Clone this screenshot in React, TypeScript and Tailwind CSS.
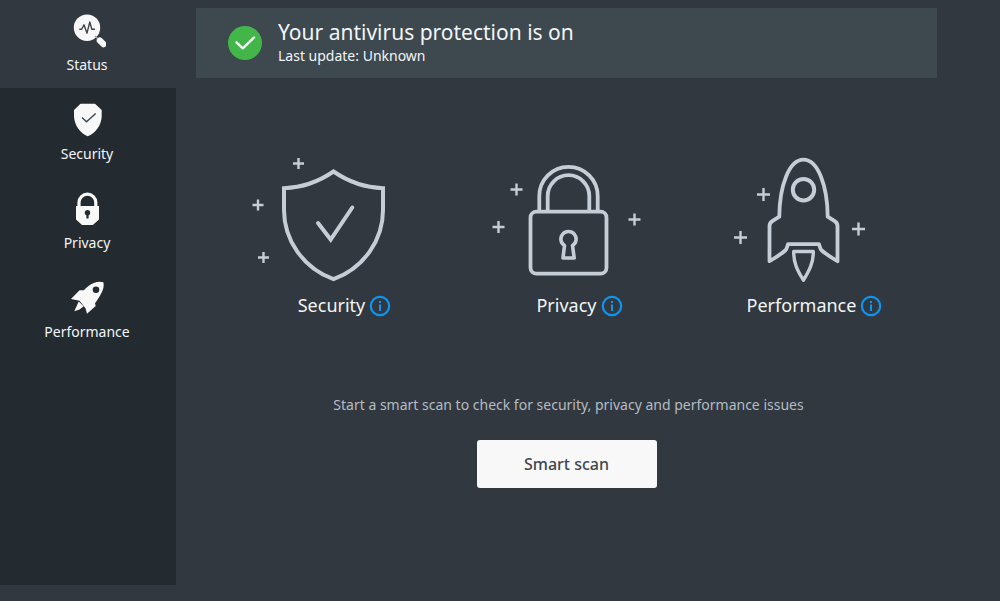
import type { ReactNode } from 'react';

function StatusIcon() {
  return (
    <svg viewBox="0 0 36 36" className="size-9" fill="none" aria-hidden="true">
      <circle cx="17" cy="15.7" r="13.2" fill="#f8f8f8" />
      <path d="M9.3 17.3h2.4L14 12.8l3 8.4L19.8 10l2 7.3H25" stroke="#3d4850" strokeWidth="1.4" strokeLinejoin="round" />
      <path d="M25 24l4 4" stroke="#9aa3aa" strokeWidth="1.5" />
      <path d="M29.8 28.6l3.800 3.600" stroke="#f8f8f8" strokeWidth="6.200" strokeLinecap="round" />
    </svg>
  );
}

function ShieldIcon() {
  return (
    <svg viewBox="0 0 36 36" className="size-9" fill="none" aria-hidden="true">
      <path d="M10.5 2.7h14.500L31.700 9v6c0 9-6.500 17.500-14 20.200C10.500 32.500 4 24 4 15V9z" fill="#f8f8f8" />
      <path d="M12 16.500l4.500 4.300 9.200-8.200" stroke="#3d4850" strokeWidth="1.4" />
    </svg>
  );
}

function LockIcon() {
  return (
    <svg viewBox="0 0 36 36" className="size-9" fill="none" aria-hidden="true">
      <path d="M9 17v-4.500a8.400 8.400 0 0 1 16.800 0V17" stroke="#f8f8f8" strokeWidth="3.200" />
      <path d="M6 16h23v13.500L22.800 35H12l-6-5.500z" fill="#f8f8f8" />
      <circle cx="17.500" cy="22.800" r="2.700" fill="#232b31" />
      <path d="M17.500 23v5.500" stroke="#232b31" strokeWidth="2.200" />
    </svg>
  );
}

function RocketIcon() {
  return (
    <svg viewBox="0 0 36 36" className="size-9" aria-hidden="true">
      <path
        d="M33.400 3.300c.8 3.400 0 7-1.700 10.200-1.800 3.800-4.200 7.500-6.700 10.800l.7 2.700-8.700 7.700-1.500-5.400-6-7.600L1 20l8.500-8.700h4.300c3-3.200 6.300-5.800 10-7.300 3.200-1.300 6.500-1.700 9.600-.7z"
        fill="#f8f8f8"
      />
      <circle cx="26" cy="10.700" r="3.300" fill="#232b31" />
      <path d="M8.700 22.500l5 4.700-4.200 3.300-5.200 1.700z" fill="#f8f8f8" />
    </svg>
  );
}

function Plus({ x, y, r = 6 }: { x: number; y: number; r?: number }) {
  return <path d={`M${x - r} ${y}h${r * 2}M${x} ${y - r}v${r * 2}`} strokeWidth="2.400" strokeLinecap="butt" />;
}

function Art({ children }: { children: ReactNode }) {
  return (
    <svg
      viewBox="-100 0 200 140"
      className="h-[140px] w-[200px]"
      fill="none"
      stroke="#c5ced7"
      strokeWidth="4"
      strokeLinecap="round"
      strokeLinejoin="round"
      aria-hidden="true"
    >
      {children}
    </svg>
  );
}

function ShieldArt() {
  return (
    <Art>
      <path
        d="M.5 21.500C-14 31.500-31 37.500-49 38.200V60C-49 90-30 118 .5 129.200 31 118 50 90 50 60V38.200C32 37.500 15 31.500.5 21.500z"
        strokeLinejoin="miter"
      />
      <path d="M-15 73L-2.300 89.500 19.300 57.500" strokeLinejoin="miter" />
      <Plus x={-34.5} y={13.5} r={5.5} />
      <Plus x={-75} y={55} r={5.5} />
      <Plus x={-69.5} y={107.5} r={5.5} />
    </Art>
  );
}

function LockArt() {
  return (
    <Art>
      <rect x="-37.500" y="61.700" width="76" height="62" rx="6" strokeWidth="3.800" />
      <path d="M-28.700 61V46a29.200 29.200 0 0 1 58.400 0v15M-20.300 61V46a20.800 20.800 0 0 1 41.600 0v15" strokeWidth="3.800" />
      <path d="M-3.500 95.500a7.600 7.600 0 1 1 8 0l1.700 12.500H-5z" strokeWidth="3.600" />
      <Plus x={-51.500} y={39.500} />
      <Plus x={-69.500} y={77} />
      <Plus x={66.500} y={69.500} />
    </Art>
  );
}

function RocketArt() {
  return (
    <Art>
      <path
        d="M.5 9.700C-14 9.700-23.500 36-23.700 66.700l-7 4.500c-2 1.300-2.800 2.500-2.800 5v35c7-4 12-7.500 16-11 1.500-1.500 1.700-4 2.500-6h31c.8 2 1 4.500 2.500 6 4 3.500 9 7 16 11v-35c0-2.500-.8-3.700-2.800-5l-7-4.500C24.500 36 15 9.700.5 9.700z"
        strokeWidth="3.800"
      />
      <circle cx=".5" cy="39.700" r="10.700" />
      <path d="M-9.300 101.500h19.600C10.500 113 6 121 .5 130.200-5.500 121-9.500 113-9.300 101.500z" strokeWidth="3.400" />
      <Plus x={-39.500} y={44.500} r={6.5} />
      <Plus x={-62.500} y={87.500} r={6.5} />
      <Plus x={55.500} y={79} r={6.5} />
    </Art>
  );
}

function InfoIcon() {
  return (
    <svg viewBox="0 0 22 22" className="size-[22px]" fill="none" stroke="#0d96f0" aria-hidden="true">
      <circle cx="11" cy="11" r="9.200" strokeWidth="2.200" />
      <path d="M11 9.500v6.500M11 6v2" strokeWidth="2" />
    </svg>
  );
}

const navItems = [
  { label: 'Status', icon: <StatusIcon />, active: true },
  { label: 'Security', icon: <ShieldIcon />, active: false },
  { label: 'Privacy', icon: <LockIcon />, active: false },
  { label: 'Performance', icon: <RocketIcon />, active: false },
];

const areas = [
  { label: 'Security', art: <ShieldArt /> },
  { label: 'Privacy', art: <LockArt /> },
  { label: 'Performance', art: <RocketArt /> },
];

export default function App() {
  return (
    <div className="flex min-h-screen bg-[#31383f] font-['Noto_Sans','Open_Sans',sans-serif] text-[#f2f5f7]">
      <nav className="mb-4 w-44 shrink-0 bg-[#232b31]" aria-label="Main">
        <ul>
          {navItems.map((item) => (
            <li key={item.label}>
              <a
                href={`#${item.label.toLowerCase()}`}
                aria-current={item.active ? 'page' : undefined}
                className={
                  item.active
                    ? 'flex h-[88px] flex-col items-center gap-[7px] bg-[#31383f] pt-3 text-sm'
                    : 'flex h-[89px] flex-col items-center gap-[7px] pt-[13px] text-sm'
                }
              >
                {item.icon}
                <span className="pr-0.5">{item.label}</span>
              </a>
            </li>
          ))}
        </ul>
      </nav>

      <main className="min-w-0 flex-1 pt-2 pr-[63px] pl-5">
        <header className="flex h-[70px] items-center gap-4 bg-[#3d484f] pl-8">
          <svg viewBox="0 0 34 34" className="size-[34px] shrink-0" aria-hidden="true">
            <circle cx="17" cy="17" r="17" fill="#43b649" />
            <path d="M8.500 16.300l6.300 6L26 11.500" fill="none" stroke="#fff" strokeWidth="2.400" strokeLinecap="round" strokeLinejoin="round" />
          </svg>
          <div className="pb-0.5">
            <h1 className="text-[21px] leading-7">Your antivirus protection is on</h1>
            <p className="text-sm leading-5">Last update: Unknown</p>
          </div>
        </header>

        <div className="grid grid-cols-3 pt-[72px] pr-[17px] pl-[19px]">
          {areas.map((area) => (
            <section key={area.label} className="flex flex-col items-center">
              {area.art}
              <div className="flex items-center gap-1 pt-1 pl-6">
                <h2 className="pb-0.5 text-lg leading-[22px]">{area.label}</h2>
                <button type="button" aria-label={`About ${area.label}`}>
                  <InfoIcon />
                </button>
              </div>
            </section>
          ))}
        </div>

        <div className="flex flex-col items-center pt-[75px]">
          <p className="pl-1 text-sm leading-6 text-[#b4bcc3]">
            Start a smart scan to check for security, privacy and performance issues
          </p>
          <button type="button" className="mt-[23px] h-12 w-[180px] rounded-[3px] bg-[#f8f8f8] text-base font-medium text-[#3d4850]">
            Smart scan
          </button>
        </div>
      </main>
    </div>
  );
}
